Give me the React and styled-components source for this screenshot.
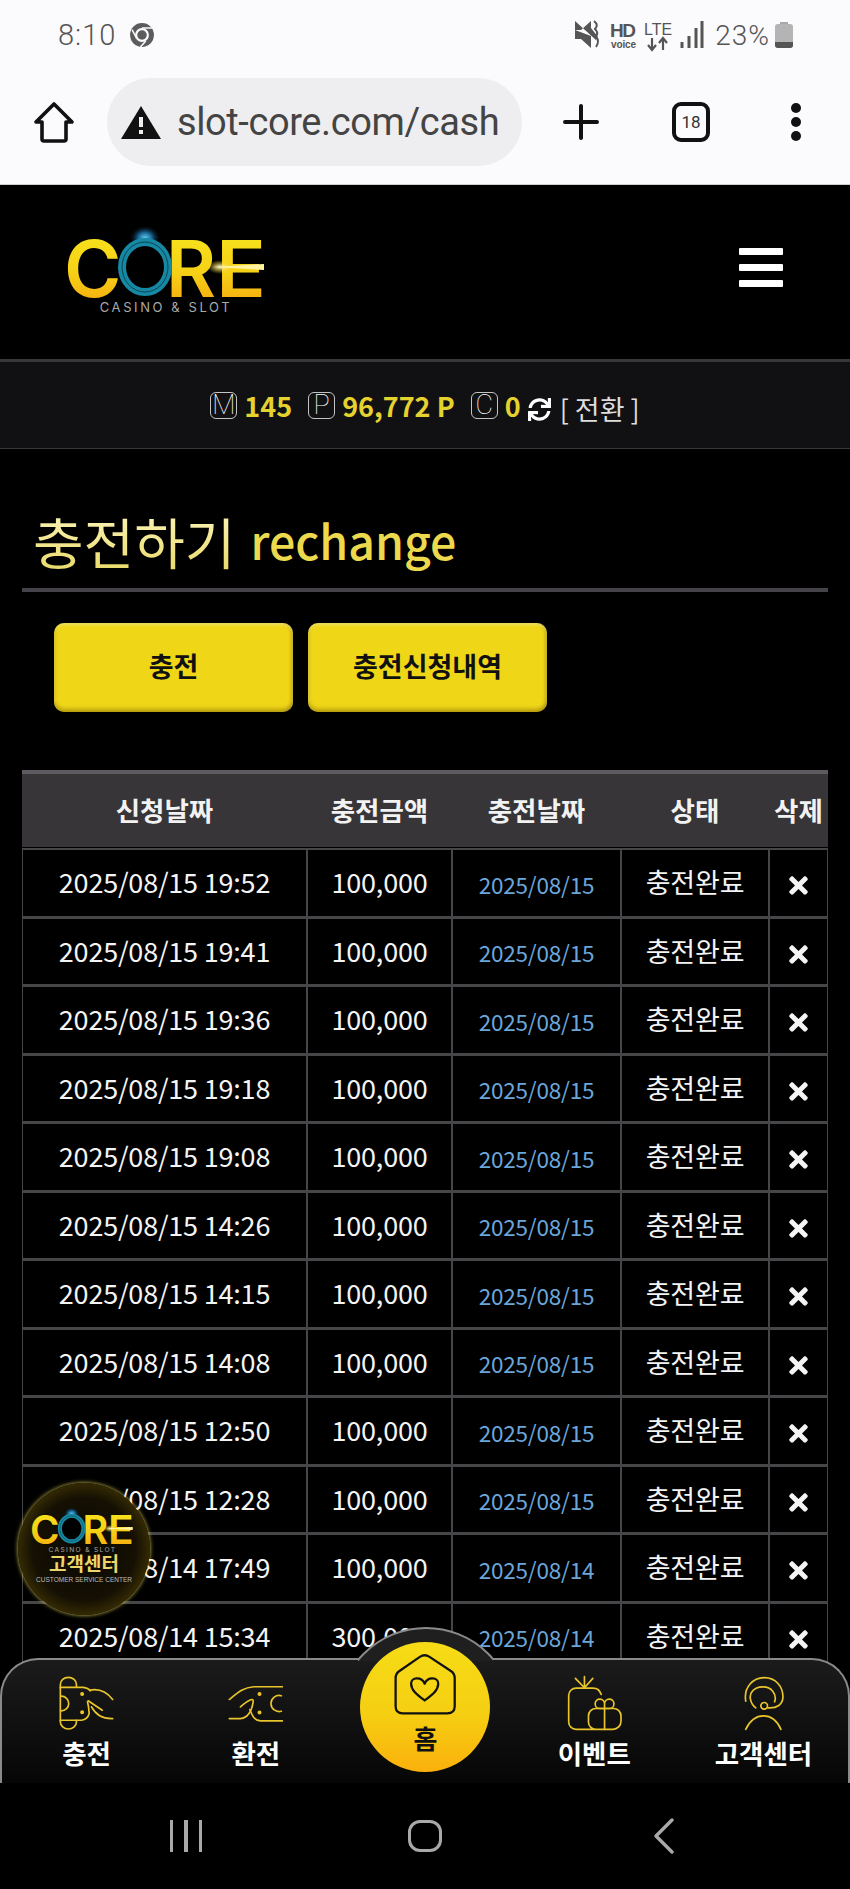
import React from "react";
import styled, { createGlobalStyle } from "styled-components";
import { FaTimes, FaSync } from "react-icons/fa";

const rows = [
    ["2025/08/15 19:52", "100,000", "2025/08/15"],
    ["2025/08/15 19:41", "100,000", "2025/08/15"],
    ["2025/08/15 19:36", "100,000", "2025/08/15"],
    ["2025/08/15 19:18", "100,000", "2025/08/15"],
    ["2025/08/15 19:08", "100,000", "2025/08/15"],
    ["2025/08/15 14:26", "100,000", "2025/08/15"],
    ["2025/08/15 14:15", "100,000", "2025/08/15"],
    ["2025/08/15 14:08", "100,000", "2025/08/15"],
    ["2025/08/15 12:50", "100,000", "2025/08/15"],
    ["2025/08/15 12:28", "100,000", "2025/08/15"],
    ["2025/08/14 17:49", "100,000", "2025/08/14"],
    ["2025/08/14 15:34", "300,000", "2025/08/14"],
];

const headers = ["신청날짜", "충전금액", "충전날짜", "상태", "삭제"];

// the CORE mark, also used small inside the floating badge
const CoreLogo = ({ id, width }) => (
    <svg width={width} viewBox="0 0 220 92" overflow="visible" style={{ display: "block" }}>
        <defs>
            <linearGradient id={id} x1="0" y1="0" x2="0" y2="1">
                <stop offset="0" stopColor="#f7e81e" />
                <stop offset="0.55" stopColor="#f6d016" />
                <stop offset="1" stopColor="#f59e0c" />
            </linearGradient>
            <radialGradient id={id + "-glow"}>
                <stop offset="0" stopColor="#5fc8f0" />
                <stop offset="0.45" stopColor="#16608c" />
                <stop offset="1" stopColor="#000" stopOpacity="0" />
            </radialGradient>
            <radialGradient id={id + "-flare"}>
                <stop offset="0" stopColor="#fff8c8" />
                <stop offset="1" stopColor="#f6d016" stopOpacity="0" />
            </radialGradient>
        </defs>
        <ellipse cx="85" cy="13" rx="16" ry="13" fill={`url(#${id}-glow)`} />
        <text x="4" y="72" fontFamily="Inter" fontWeight="600" fontSize="78" fill={`url(#${id})`}>C</text>
        <text x="106" y="72" fontFamily="Inter" fontWeight="600" fontSize="78" fill={`url(#${id})`} textLength="50" lengthAdjust="spacingAndGlyphs">R</text>
        <text x="156" y="72" fontFamily="Inter" fontWeight="600" fontSize="78" fill={`url(#${id})`} textLength="50" lengthAdjust="spacingAndGlyphs">E</text>
        <ellipse cx="85" cy="42" rx="23" ry="25" fill="#000" stroke="#1788a4" strokeWidth="8" />
        <ellipse cx="85" cy="42" rx="23" ry="25" fill="none" stroke="#0a4452" strokeWidth="1" />
        <ellipse cx="160" cy="42" rx="13" ry="7" fill={`url(#${id}-flare)`} />
        <polygon points="152,42 204,39 204,45" fill="#fff3a0" />
        <text x="106" y="87" textAnchor="middle" fontFamily="Inter" fontSize="13" letterSpacing="2.6" fill="#a9a9a9">CASINO &amp; SLOT</text>
    </svg>
);

const ChromeIcon = () => (
    <svg width="26" height="26" viewBox="0 0 24 24">
        <circle cx="12" cy="12" r="11" fill="#5c5c5c" />
        <circle cx="12" cy="12" r="6.4" fill="#fbfafc" />
        <circle cx="12" cy="12" r="4.4" fill="#5c5c5c" />
        <path d="M12 5.6 H22 M7 15 L2.8 7 M15.5 17.5 L10.5 23" stroke="#fbfafc" strokeWidth="1.4" />
    </svg>
);

const StatusIcons = () => (
    <svg width="130" height="38" viewBox="0 0 130 38">
        <path d="M1 14 H7 L17 5 V12 L24 21 L22 24 L1 5 Z M1 14 V23 H7 L17 32 V20 Z" fill="#555" />
        <path d="M20 5 Q25 9 21 13 Q25 17 22 20 M22 21 Q26 25 22 31" stroke="#555" strokeWidth="2" fill="none" />
        <text x="36" y="21" fontFamily="Liberation Sans" fontWeight="700" fontSize="19" fill="#555" textLength="26">HD</text>
        <text x="37" y="32" fontFamily="Liberation Sans" fontWeight="700" fontSize="10" fill="#555" textLength="25">voice</text>
        <text x="70" y="19" fontFamily="Liberation Sans" fontSize="17" fill="#555" textLength="28" lengthAdjust="spacingAndGlyphs">LTE</text>
        <path d="M78 22 V34 M74 29 L78 34 L82 29 M89 34 V22 M85 27 L89 22 L93 27" stroke="#555" strokeWidth="2.2" fill="none" />
        <path d="M108 26 V32 M115 20 V32 M122 12 V32 M128 5 V32" stroke="#555" strokeWidth="3" />
    </svg>
);

const Battery = () => (
    <svg width="18" height="26" viewBox="0 0 18 26">
        <rect x="5" y="0" width="8" height="3" fill="#a8a8a8" />
        <rect x="0" y="2" width="18" height="24" rx="3" fill="#b4b4b4" />
        <path d="M0 20 H18 V23 A3 3 0 0 1 15 26 H3 A3 3 0 0 1 0 23 Z" fill="#555" />
    </svg>
);

const HomeOutline = () => (
    <svg width="42" height="42" viewBox="0 0 42 42" fill="none" stroke="#111" strokeWidth="3.6" strokeLinejoin="round">
        <path d="M21 3 L39 21 H33 V38 Q33 40 31 40 H11 Q9 40 9 38 V21 H3 Z" />
    </svg>
);

const WarnIcon = () => (
    <svg width="40" height="34" viewBox="0 0 40 34">
        <path d="M20 1 L40 34 H0 Z" fill="#111" />
        <rect x="18" y="12" width="4" height="10" fill="#eeedef" />
        <rect x="18" y="25" width="4" height="4" fill="#eeedef" />
    </svg>
);

const PlusIcon = () => (
    <svg width="36" height="36" viewBox="0 0 36 36" stroke="#111" strokeWidth="4" strokeLinecap="round">
        <path d="M18 2 V34 M2 18 H34" />
    </svg>
);

const YELLOW = "#e9c52c";

// drawn in crop coordinates, so the viewBox sits where the crop had the icon
const NavIcon = ({ name }) => {
    const common = { width: 57, height: 57, fill: "none", stroke: YELLOW, strokeWidth: 5, strokeLinecap: "round", strokeLinejoin: "round" };
    if (name === "charge") {
        return (
            <svg viewBox="50 45 170 170" {...common}>
                <path d="M105 80 V73 A24 21 0 0 0 57 73 V185 A24 21 0 0 0 105 185 V180" />
                <path d="M57 82 H125 Q140 84 146 92 M57 180 H120 Q138 178 143 160 Q142 140 138 125" />
                <path d="M60 108 A22 22 0 0 1 60 152" />
                <path d="M146 90 C175 85 195 95 213 118 M140 122 L182 150 M150 140 C165 168 185 176 213 175" />
                <circle cx="122" cy="102" r="3.5" fill={YELLOW} />
                <circle cx="122" cy="156" r="3.5" fill={YELLOW} />
            </svg>
        );
    }
    if (name === "exchange") {
        return (
            <svg viewBox="560 45 170 170" {...common}>
                <path d="M725 80 H640 C610 82 595 95 567 118" />
                <path d="M725 182 H660 C640 180 635 165 628 148" />
                <path d="M567 175 H600 C625 172 635 145 638 125 C640 112 625 118 600 140" />
                <path d="M722 107 A24 24 0 1 0 722 153" />
                <circle cx="657" cy="102" r="3.5" fill={YELLOW} />
                <circle cx="657" cy="157" r="3.5" fill={YELLOW} />
            </svg>
        );
    }
    if (name === "event") {
        return (
            <svg viewBox="50 30 170 170" {...common}>
                <path d="M78 40 L105 68 L130 40 M105 35 V68" />
                <path d="M155 88 C150 76 145 69 130 69 H80 A22 22 0 0 0 58 91 V170 A22 22 0 0 0 80 192 H190 A24 24 0 0 0 214 168 V152 A22 22 0 0 0 192 130 H139 A22 22 0 0 0 117 152 V170 A22 22 0 0 0 139 192" />
                <path d="M165 130 V192" />
                <path d="M165 130 L150 130 A14 14 0 1 1 165 116 Z M165 130 L180 130 A14 14 0 1 0 165 116 Z" />
            </svg>
        );
    }
    return (
        <svg viewBox="560 30 170 170" {...common}>
            <path d="M592 108 C585 65 615 38 648 38 C682 38 703 65 703 95 C703 118 685 130 658 128" />
            <path d="M622 128 C605 115 600 90 612 78 C625 62 660 60 672 78 C680 88 682 100 678 110" />
            <circle cx="647" cy="122" r="10" />
            <path d="M592 192 C605 165 620 152 645 152 C670 152 685 165 697 192" />
        </svg>
    );
};

const App = () => {
    return (
        <Page>
            <GlobalStyle />

            <BrowserChrome>
                <StatusBar>
                    <TimeGroup>
                        <Clock>8:10</Clock>
                        <ChromeIcon />
                    </TimeGroup>
                    <StatusRight>
                        <StatusIcons />
                        <Percent>23%</Percent>
                        <Battery />
                    </StatusRight>
                </StatusBar>
                <AddressRow>
                    <HomeOutline />
                    <AddressPill>
                        <WarnIcon />
                        <Url>slot-core.com/cash</Url>
                    </AddressPill>
                    <IconSlot $left={41}><PlusIcon /></IconSlot>
                    <TabCount>18</TabCount>
                    <MenuDots><i /><i /><i /></MenuDots>
                </AddressRow>
            </BrowserChrome>

            <SiteHeader>
                <CoreLogo id="logo-top" width={220} />
                <Hamburger><i /><i /><i /></Hamburger>
            </SiteHeader>

            <BalanceBar>
                <Balance>
                    <IconBox>M</IconBox>
                    <Amount>145</Amount>
                </Balance>
                <Balance>
                    <IconBox>P</IconBox>
                    <Amount>96,772 P</Amount>
                </Balance>
                <Balance>
                    <IconBox>C</IconBox>
                    <Amount>0</Amount>
                </Balance>
                <Convert>
                    <FaSync size={23} color="#fff" />
                    <ConvertText>[ 전환 ]</ConvertText>
                </Convert>
            </BalanceBar>

            <TitleRow>
                <TitleKo>충전하기</TitleKo>
                <TitleEn>rechange</TitleEn>
            </TitleRow>

            <ButtonRow>
                <Button>충전</Button>
                <Button>충전신청내역</Button>
            </ButtonRow>

            <Table>
                <HeadRow>
                    {headers.map((h) => <HeadCell key={h}>{h}</HeadCell>)}
                </HeadRow>
                {rows.map((r) => (
                    <Row key={r[0]}>
                        <Cell>{r[0]}</Cell>
                        <Cell>{r[1]}</Cell>
                        <DateCell>{r[2]}</DateCell>
                        <Cell>충전완료</Cell>
                        <DeleteCell><FaTimes size={27} /></DeleteCell>
                    </Row>
                ))}
            </Table>

            <FloatBadge>
                <CoreLogo id="logo-badge" width={113} />
                <FloatTitle>고객센터</FloatTitle>
                <FloatSub>CUSTOMER SERVICE CENTER</FloatSub>
            </FloatBadge>

            <Dock>
                <BumpClip><Bump /></BumpClip>
                <NavItem><NavIcon name="charge" /><NavLabel>충전</NavLabel></NavItem>
                <NavItem><NavIcon name="exchange" /><NavLabel>환전</NavLabel></NavItem>
                <HomeCell>
                    <HomeButton>
                        <svg width="62" height="62" viewBox="160 100 192 192" fill="none" stroke="#111" strokeWidth="7" strokeLinejoin="round">
                            <path d="M240 112 Q255 102 270 112 L335 155 Q348 163 348 178 V265 Q348 287 325 287 H187 Q165 287 165 265 V178 Q165 163 178 155 Z" />
                            <path d="M255 247 C230 228 213 215 213 195 C213 175 245 172 255 195 C265 172 297 175 297 195 C297 215 280 228 255 247 Z" />
                        </svg>
                        <HomeLabel>홈</HomeLabel>
                    </HomeButton>
                </HomeCell>
                <NavItem><NavIcon name="event" /><NavLabel>이벤트</NavLabel></NavItem>
                <NavItem><NavIcon name="agent" /><NavLabel>고객센터</NavLabel></NavItem>
            </Dock>

            <SystemNav>
                <RecentsIcon><i /><i /><i /></RecentsIcon>
                <HomeSquare />
                <svg width="22" height="36" viewBox="0 0 22 36" fill="none" stroke="#a9a9a9" strokeWidth="3.4" strokeLinecap="round" strokeLinejoin="round">
                    <path d="M19 2 L3 18 L19 34" />
                </svg>
            </SystemNav>
        </Page>
    );
};

export default App;

const KR = `"Noto Sans CJK KR", "Noto Sans", sans-serif`;

const GlobalStyle = createGlobalStyle`
    html, body {
        margin: 0;
        padding: 0;
        background: #000;
    }
`;

const Page = styled.div`
    position: relative;
    width: 850px;
    height: 1889px;
    overflow: hidden;
    background: #000;
    font-family: ${KR};
    color: #fff;
`;

const BrowserChrome = styled.div`
    height: 185px;
    box-sizing: border-box;
    background: #fbfafc;
    border-bottom: 1px solid #cfcfcf;
`;

const StatusBar = styled.div`
    height: 70px;
    display: flex;
    justify-content: space-between;
    align-items: center;
    padding: 0 57px 0 58px;
`;

const TimeGroup = styled.div`
    display: flex;
    align-items: center;
    gap: 13px;
`;

const Clock = styled.span`
    font-family: "Roboto", sans-serif;
    font-weight: 300;
    font-size: 29px;
    letter-spacing: 1px;
    color: #555;
`;

const StatusRight = styled.div`
    display: flex;
    align-items: center;
    gap: 5px;

    svg:first-child {
        margin-right: 6px;
    }
`;

const Percent = styled.span`
    font-family: "Roboto", sans-serif;
    font-weight: 300;
    font-size: 28px;
    letter-spacing: 1px;
    color: #555;
`;

const AddressRow = styled.div`
    height: 114px;
    box-sizing: border-box;
    display: flex;
    align-items: center;
    padding: 0 0 10px 33px;

    & > svg:first-child {
        margin-right: 32px;
    }
`;

const AddressPill = styled.div`
    width: 415px;
    height: 88px;
    flex: none;
    border-radius: 44px;
    background: #eeedef;
    display: flex;
    align-items: center;
    gap: 16px;
    padding-left: 14px;
    box-sizing: border-box;
    overflow: hidden;
`;

const Url = styled.span`
    font-family: "Roboto", sans-serif;
    font-size: 38px;
    color: #444;
    white-space: nowrap;
    letter-spacing: -0.4px;
`;

const IconSlot = styled.span`
    display: flex;
    margin-left: ${(p) => p.$left}px;
`;

const TabCount = styled.div`
    margin-left: 73px;
    box-sizing: border-box;
    width: 38px;
    height: 40px;
    border: 4px solid #111;
    border-radius: 9px;
    display: flex;
    align-items: center;
    justify-content: center;
    font-family: "Roboto", sans-serif;
    font-size: 17px;
    color: #333;
`;

const MenuDots = styled.div`
    margin-left: 81px;
    display: flex;
    flex-direction: column;
    gap: 4px;

    i {
        display: block;
        width: 10px;
        height: 10px;
        border-radius: 50%;
        background: #111;
    }
`;

const SiteHeader = styled.header`
    height: 174px;
    box-sizing: border-box;
    display: flex;
    justify-content: space-between;
    align-items: flex-start;
    padding: 40px 67px 0 60px;
`;

const Hamburger = styled.div`
    display: flex;
    flex-direction: column;
    gap: 9px;
    margin-top: 23px;

    i {
        display: block;
        width: 44px;
        height: 7px;
        border-radius: 1px;
        background: #fff;
    }
`;

const BalanceBar = styled.div`
    height: 90px;
    box-sizing: border-box;
    display: flex;
    justify-content: center;
    align-items: center;
    gap: 16px;
    background: #111114;
    border-top: 3px solid #38383c;
    border-bottom: 1px solid #38383c;
`;

const Balance = styled.div`
    display: flex;
    align-items: center;
    gap: 7px;
`;

const IconBox = styled.span`
    box-sizing: border-box;
    width: 27px;
    height: 27px;
    border: 1.5px solid #c4c4c4;
    border-radius: 6px;
    display: flex;
    align-items: center;
    justify-content: center;
    font-family: "Roboto", sans-serif;
    font-weight: 100;
    font-size: 27px;
    color: #fff;
`;

const Amount = styled.span`
    font-weight: 700;
    font-size: 27px;
    line-height: 27px;
    color: #e6d22e;
`;

const Convert = styled.div`
    display: flex;
    align-items: center;
    gap: 9px;
    margin: 8px 0 0 -9px;
`;

const ConvertText = styled.span`
    font-size: 27px;
    line-height: 30px;
    color: #ddd;
`;

const TitleRow = styled.div`
    height: 143px;
    box-sizing: border-box;
    margin: 0 22px;
    padding: 0 0 12px 11px;
    display: flex;
    align-items: flex-end;
    gap: 15px;
    border-bottom: 4px solid #454349;
`;

const TitleKo = styled.h1`
    margin: 0;
    font-weight: 400;
    font-size: 55px;
    line-height: 72px;
    background: linear-gradient(180deg, #fdf6c0 0%, #e9d964 100%);
    -webkit-background-clip: text;
    background-clip: text;
    color: transparent;
`;

const TitleEn = styled.span`
    font-weight: 500;
    font-size: 46.5px;
    line-height: 72px;
    color: #ecd94e;
`;

const ButtonRow = styled.div`
    display: flex;
    gap: 15px;
    padding: 31px 0 0 54px;
`;

const Button = styled.button`
    width: 239px;
    height: 89px;
    padding: 0 0 4px;
    border: 0;
    border-radius: 10px;
    background: #efd718;
    box-shadow: inset 0 2px 3px rgba(255, 255, 255, 0.35), inset 0 -3px 4px rgba(120, 90, 0, 0.45), inset -2px 0 3px rgba(120, 90, 0, 0.25);
    font-family: ${KR};
    font-weight: 700;
    font-size: 27px;
    color: #111;
`;

const Table = styled.div`
    margin: 58px 22px 0;
`;

const COLUMNS = "285px 145px 169px 148px 59px";

const HeadRow = styled.div`
    display: grid;
    grid-template-columns: ${COLUMNS};
    height: 77px;
    box-sizing: border-box;
    padding-bottom: 2px;
    background: #373538;
    border-top: 4px solid #5d5b60;
    margin-bottom: 1px;
`;

const HeadCell = styled.div`
    display: flex;
    align-items: center;
    justify-content: center;
    font-weight: 700;
    font-size: 26.5px;
    color: #f2f2f2;
`;

const Row = styled.div`
    display: grid;
    grid-template-columns: ${COLUMNS};
    height: 68.5px;
`;

const Cell = styled.div`
    display: flex;
    align-items: center;
    justify-content: center;
    box-sizing: border-box;
    border: solid #464649;
    border-width: 2px 1px 1px;
    font-size: 27px;
    letter-spacing: -0.2px;
    color: #f4f4f4;
    padding-bottom: 2px;
`;

const DateCell = styled(Cell)`
    font-size: 22.5px;
    color: #6ba6da;
    padding: 2px 0 0;
`;

const DeleteCell = styled(Cell)`
    padding: 6px 0 0;
`;

const FloatBadge = styled.div`
    position: absolute;
    left: 18px;
    top: 1483px;
    width: 132px;
    height: 132px;
    box-sizing: border-box;
    padding: 24px 0 0;
    border-radius: 50%;
    display: flex;
    flex-direction: column;
    align-items: center;
    background: radial-gradient(circle, #0a0802 0%, #151003 55%, #3a2f04 74%, #8f7f12 88%, #d8c52a 96%, #f7ec70 100%);
    box-shadow: 0 0 4px rgba(245, 230, 100, 0.9);
    z-index: 3;
`;

const FloatTitle = styled.div`
    margin-top: -2px;
    font-weight: 700;
    font-size: 19px;
    line-height: 22px;
    color: #ecd66a;
`;

const FloatSub = styled.div`
    margin-top: 1px;
    font-family: "Liberation Sans", sans-serif;
    font-size: 6.5px;
    line-height: 10px;
    white-space: nowrap;
    color: #bdbdbd;
`;

const Dock = styled.nav`
    position: absolute;
    left: 0;
    top: 1658px;
    width: 850px;
    height: 125px;
    box-sizing: border-box;
    display: grid;
    grid-template-columns: repeat(5, 1fr);
    border: 2px solid #8a8a8a;
    border-bottom: 0;
    border-radius: 38px 38px 0 0;
    background: linear-gradient(180deg, #1b1b1b 0%, #060606 100%);
    z-index: 2;
`;

const BumpClip = styled.div`
    position: absolute;
    left: 356px;
    top: -33px;
    width: 135px;
    height: 34px;
    overflow: hidden;
`;

const Bump = styled.div`
    box-sizing: border-box;
    width: 178px;
    height: 178px;
    margin-left: -21px;
    border: 2px solid #8a8a8a;
    border-radius: 50%;
    background: #1f1f1f;
`;

const NavItem = styled.div`
    display: flex;
    flex-direction: column;
    align-items: center;
    padding-top: 15px;
`;

const NavLabel = styled.span`
    font-weight: 700;
    font-size: 26.5px;
    line-height: 36px;
    margin-top: 3px;
    color: #fff;
`;

const HomeCell = styled.div`
    position: relative;
`;

const HomeButton = styled.div`
    position: absolute;
    left: 20px;
    top: -18px;
    width: 130px;
    height: 130px;
    box-sizing: border-box;
    padding-top: 11px;
    border-radius: 50%;
    display: flex;
    flex-direction: column;
    align-items: center;
    background: linear-gradient(180deg, #f6dc16 0%, #f5cf12 55%, #fbb00c 100%);
`;

const HomeLabel = styled.span`
    font-weight: 700;
    font-size: 26px;
    line-height: 30px;
    margin-top: 8px;
    color: #111;
`;

const SystemNav = styled.div`
    position: absolute;
    left: 0;
    bottom: 0;
    width: 850px;
    height: 106px;
    display: grid;
    grid-template-columns: repeat(3, 239px);
    justify-content: center;
    justify-items: center;
    align-items: center;
`;

const RecentsIcon = styled.div`
    display: flex;
    gap: 11px;

    i {
        display: block;
        width: 3.5px;
        height: 32px;
        background: #a9a9a9;
    }
`;

const HomeSquare = styled.div`
    box-sizing: border-box;
    width: 34px;
    height: 32px;
    border: 3.5px solid #a9a9a9;
    border-radius: 12px;
`;
